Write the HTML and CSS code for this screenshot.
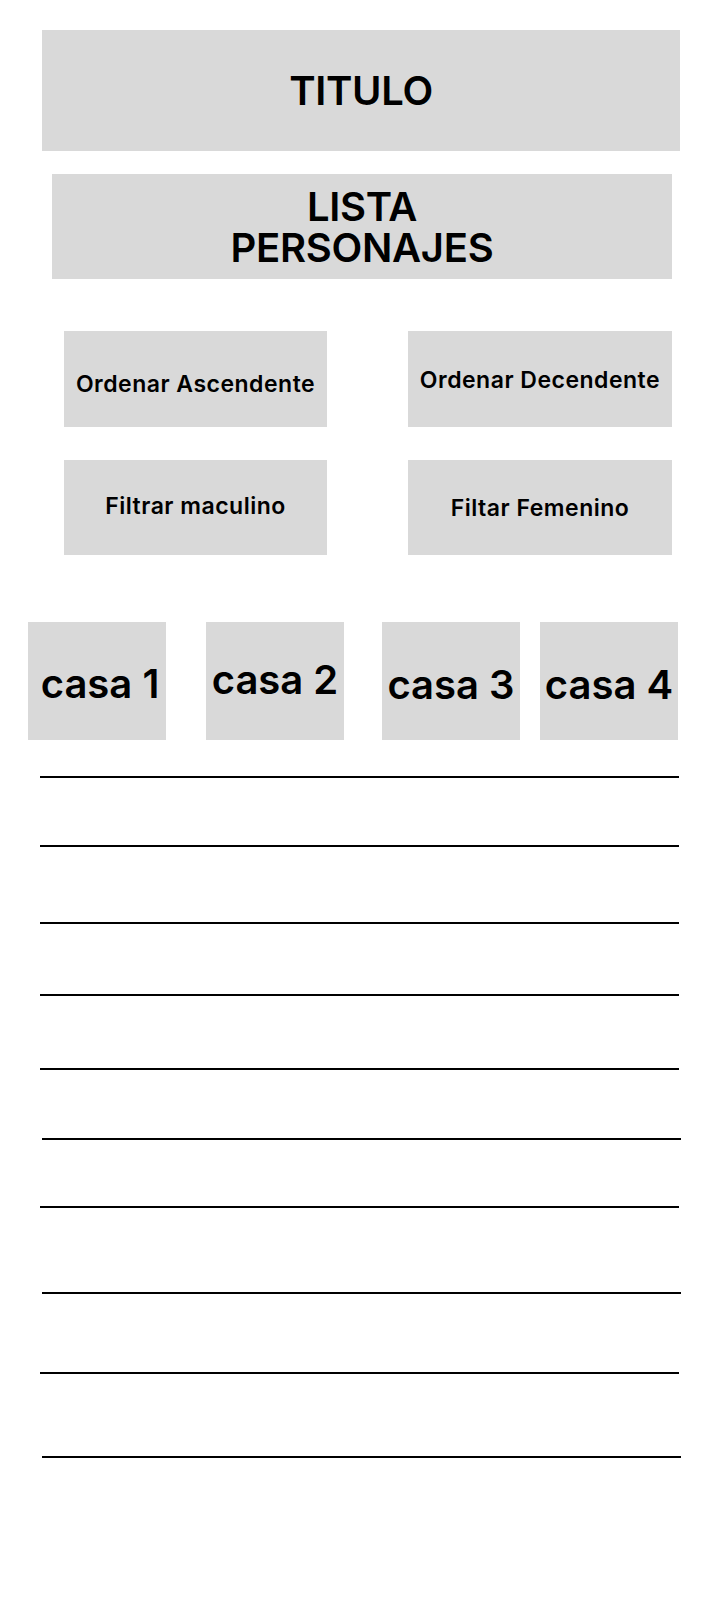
FILE: index.html
```html
<!DOCTYPE html>
<html lang="es">
<head>
    <meta charset="UTF-8">
    <meta name="viewport" content="width=device-width, initial-scale=1.0">
    <title>Lista Personajes</title>
    <link rel="stylesheet" href="styles.css">
</head>
<body>

<div id="titulo">TITULO</div>

<div id="subtitulo">LISTA<br>PERSONAJES</div>

<div id="botones">
    <button class="boton asc">Ordenar Ascendente</button>
    <button class="boton desc">Ordenar Decendente</button>
    <button class="boton masc">Filtrar maculino</button>
    <button class="boton fem">Filtar Femenino</button>
</div>

<div id="casas">
    <div class="casa">casa 1</div>
    <div class="casa">casa 2</div>
    <div class="casa">casa 3</div>
    <div class="casa">casa 4</div>
</div>

<div id="lista">
    <div class="fila"></div>
    <div class="fila"></div>
    <div class="fila"></div>
    <div class="fila"></div>
    <div class="fila"></div>
    <div class="fila"></div>
    <div class="fila"></div>
    <div class="fila"></div>
    <div class="fila"></div>
    <div class="fila"></div>
</div>

</body>
</html>
```

FILE: styles.css
```css
body {
    font-family: 'Inter', 'Noto Sans', sans-serif;
    font-weight: 600;
    color: #000;
    background: #fff;
    margin: 0;
    width: 720px;
    height: 1600px;
}

#titulo {
    display: flex;
    justify-content: center;
    align-items: center;
    background-color: #d9d9d9;
    margin: 30px 0 0 42px;
    width: 638px;
    height: 121px;
    font-size: 40px;
    letter-spacing: -0.3px;
}

#subtitulo {
    display: flex;
    justify-content: center;
    align-items: center;
    text-align: center;
    background-color: #d9d9d9;
    margin: 23px 0 0 52px;
    width: 620px;
    height: 105px;
    font-size: 40px;
    line-height: 41px;
    letter-spacing: -0.3px;
}

#botones {
    display: grid;
    grid-template-columns: 263px 264px;
    column-gap: 81px;
    row-gap: 33px;
    margin: 52px 0 0 64px;
}

.boton {
    display: flex;
    justify-content: center;
    align-items: center;
    height: 96px;
    padding: 0;
    border: none;
    background-color: #d9d9d9;
    font-family: inherit;
    font-weight: 600;
    font-size: 23px;
    letter-spacing: 0.5px;
    color: #000;
}

.boton.asc {
    padding-top: 10px;
}

.boton.desc {
    padding-top: 2px;
}

.boton.masc,
.boton.fem {
    height: 95px;
}

.boton.masc {
    padding-bottom: 4px;
}

#casas {
    display: flex;
    margin: 67px 0 0 28px;
}

.casa {
    display: flex;
    justify-content: center;
    align-items: center;
    box-sizing: border-box;
    width: 138px;
    height: 118px;
    background-color: #d9d9d9;
    font-size: 40px;
}

.casa:nth-child(1) {
    padding-left: 6px;
    padding-top: 4px;
}

.casa:nth-child(2) {
    margin-left: 40px;
    padding-bottom: 4px;
}

.casa:nth-child(3) {
    margin-left: 38px;
    padding-top: 6px;
}

.casa:nth-child(4) {
    margin-left: 20px;
    padding-top: 6px;
}

#lista {
    display: flex;
    flex-direction: column;
}

.fila {
    width: 639px;
    margin-left: 40px;
    border-bottom: 2px solid #000;
}

.fila:nth-child(1) { height: 36px; }
.fila:nth-child(2) { height: 67px; }
.fila:nth-child(3) { height: 75px; }
.fila:nth-child(4) { height: 70px; }
.fila:nth-child(5) { height: 72px; }
.fila:nth-child(6) { height: 68px; margin-left: 42px; }
.fila:nth-child(7) { height: 66px; }
.fila:nth-child(8) { height: 84px; margin-left: 42px; }
.fila:nth-child(9) { height: 78px; }
.fila:nth-child(10) { height: 82px; margin-left: 42px; }
```
